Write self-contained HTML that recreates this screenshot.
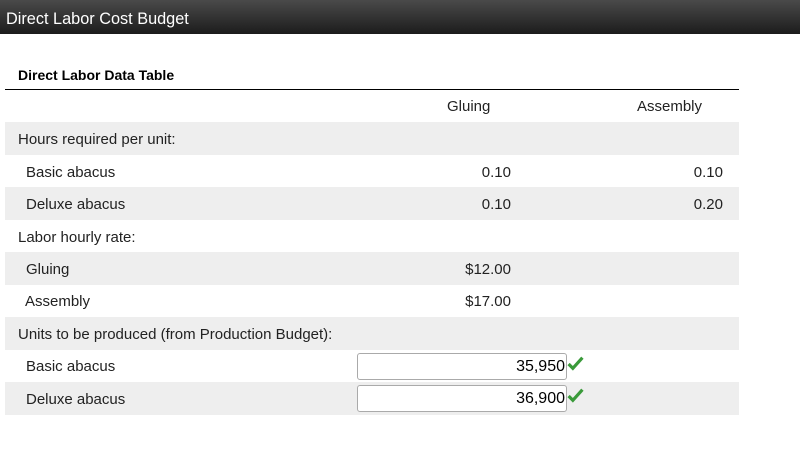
<!DOCTYPE html>
<html><head><style>
body{margin:0;width:800px;height:458px;background:#fff;font-family:"Liberation Sans",Arial,sans-serif;font-size:15px;color:#222;position:relative;overflow:hidden}
.hdr{position:absolute;left:0;top:0;width:800px;height:34px;background:linear-gradient(#4a4a4a,#1c1c1c);color:#fff;font-size:16.3px;line-height:38px;padding-left:6px;box-sizing:border-box}
.t{position:absolute;left:18px;top:67px;font-weight:bold;font-size:14px;color:#000}
.line{position:absolute;left:5px;top:89px;width:734px;height:1px;background:#000}
.row{position:absolute;left:5px;width:734px;height:33px}
.g{background:#eee}
.a{position:absolute;line-height:33px;white-space:nowrap;margin-top:1px}
.r{text-align:right}
.inp{position:absolute;left:357px;width:207px;height:25px;border:1px solid #aaa;border-radius:3px;background:#fff;box-sizing:content-box;text-align:right;font-size:16px;line-height:25px;color:#000;padding-right:1px}
.ck{position:absolute;left:567px}
</style></head><body>
<div class="hdr">Direct Labor Cost Budget</div>
<div class="t">Direct Labor Data Table</div>
<div class="line"></div>
<div class="a" style="left:447px;top:89px">Gluing</div>
<div class="a" style="left:637px;top:89px">Assembly</div>
<div class="row g" style="top:122px"></div>
<div class="a" style="left:18px;top:122px">Hours required per unit:</div>
<div class="a" style="left:26px;top:155px">Basic abacus</div>
<div class="a r" style="right:289px;top:155px">0.10</div>
<div class="a r" style="right:77px;top:155px">0.10</div>
<div class="row g" style="top:187px"></div>
<div class="a" style="left:26px;top:187px">Deluxe abacus</div>
<div class="a r" style="right:289px;top:187px">0.10</div>
<div class="a r" style="right:77px;top:187px">0.20</div>
<div class="a" style="left:18px;top:220px">Labor hourly rate:</div>
<div class="row g" style="top:252px"></div>
<div class="a" style="left:26px;top:252px">Gluing</div>
<div class="a r" style="right:289px;top:252px">$12.00</div>
<div class="a" style="left:25px;top:284px">Assembly</div>
<div class="a r" style="right:289px;top:284px">$17.00</div>
<div class="row g" style="top:317px"></div>
<div class="a" style="left:18px;top:317px">Units to be produced (from Production Budget):</div>
<div class="a" style="left:26px;top:349px">Basic abacus</div>
<div class="inp" style="top:353px">35,950</div>
<svg class="ck" style="top:355px" width="17" height="17" viewBox="0 0 16 16"><path d="M1.5 8.5 L5.5 12.5 L14.5 2.5" fill="none" stroke="#3a9a3a" stroke-width="3"/></svg>
<div class="row g" style="top:382px"></div>
<div class="a" style="left:26px;top:382px">Deluxe abacus</div>
<div class="inp" style="top:385px">36,900</div>
<svg class="ck" style="top:387px" width="17" height="17" viewBox="0 0 16 16"><path d="M1.5 8.5 L5.5 12.5 L14.5 2.5" fill="none" stroke="#3a9a3a" stroke-width="3"/></svg>
</body></html>
